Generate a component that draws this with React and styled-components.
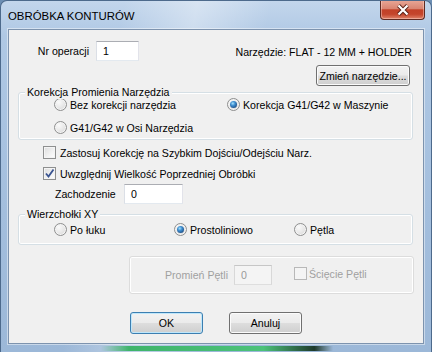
import styled, { createGlobalStyle } from "styled-components";

const GlobalStyle = createGlobalStyle`
  html, body {
    margin: 0;
    padding: 0;
    background: #6d8fb4;
  }
  body {
    font-family: "Liberation Sans", Arial, sans-serif;
    font-size: 10.6px;
    color: #000000;
  }
`;

function Radio({ checked, disabled }) {
  return (
    <RadioCircle $disabled={disabled}>{checked && <RadioDot />}</RadioCircle>
  );
}

function Checkbox({ checked, disabled }) {
  return (
    <CheckBoxSquare $disabled={disabled}>
      {checked && (
        <svg width="11" height="11" viewBox="0 0 11 11">
          <polyline
            points="2,5.5 4.5,8.5 9.5,1.5"
            fill="none"
            stroke="#3a5491"
            strokeWidth="1.8"
          />
        </svg>
      )}
    </CheckBoxSquare>
  );
}

function App() {
  return (
    <>
      <GlobalStyle />
      <Window>
        <TitleBar>
          <Title>OBRÓBKA KONTURÓW</Title>
          <CloseButton>
            <svg width="14" height="12" viewBox="0 0 14 12">
              <path d="M2.5 1.5 L11.5 10.5 M11.5 1.5 L2.5 10.5" stroke="#5a2219" strokeWidth="4" />
              <path d="M2.5 1.5 L11.5 10.5 M11.5 1.5 L2.5 10.5" stroke="#ffffff" strokeWidth="2.2" />
            </svg>
          </CloseButton>
        </TitleBar>
        <Client>
          <TopRow>
            <FieldLabel $width={71}>Nr operacji</FieldLabel>
            <TextBox $width={43}>1</TextBox>
            <Spacer />
            <ToolName>Narzędzie: FLAT - 12 MM + HOLDER</ToolName>
          </TopRow>
          <ChangeRow>
            <Button $width={94}>Zmień narzędzie...</Button>
          </ChangeRow>

          <Group $height={48}>
            <Legend>Korekcja Promienia Narzędzia</Legend>
            <RadioRow>
              <Option $width={173}>
                <Radio />
                Bez korekcji narzędzia
              </Option>
              <Option>
                <Radio checked />
                Korekcja G41/G42 w Maszynie
              </Option>
            </RadioRow>
            <RadioRow>
              <Option>
                <Radio />
                G41/G42 w Osi Narzędzia
              </Option>
            </RadioRow>
          </Group>

          <CheckList>
            <CheckRow>
              <Checkbox />
              Zastosuj Korekcję na Szybkim Dojściu/Odejściu Narz.
            </CheckRow>
            <CheckRow>
              <Checkbox checked />
              Uwzględnij Wielkość Poprzedniej Obróbki
            </CheckRow>
            <OverlapRow>
              <FieldLabel $width={69} $left>
                Zachodzenie
              </FieldLabel>
              <TextBox $width={59}>0</TextBox>
            </OverlapRow>
          </CheckList>

          <Group $height={31} $top={10}>
            <Legend>Wierzchołki XY</Legend>
            <RadioRow $height={29}>
              <Option $width={120}>
                <Radio />
                Po łuku
              </Option>
              <Option $width={120}>
                <Radio checked />
                Prostoliniowo
              </Option>
              <Option>
                <Radio />
                Pętla
              </Option>
            </RadioRow>
          </Group>

          <LoopGroup>
            <FieldLabel $width={69} $left $disabled>
              Promień Pętli
            </FieldLabel>
            <TextBox $width={38} $disabled>
              0
            </TextBox>
            <LoopCheck>
              <Checkbox disabled />
              Ścięcie Pętli
            </LoopCheck>
          </LoopGroup>

          <ButtonRow>
            <Button $width={73} $height={22} $default>
              OK
            </Button>
            <Button $width={73} $height={22}>
              Anuluj
            </Button>
          </ButtonRow>
        </Client>
        <Glow />
      </Window>
    </>
  );
}

const Window = styled.div`
  position: relative;
  width: 432px;
  height: 352px;
  box-sizing: border-box;
  padding: 0 7px 8px;
  display: flex;
  flex-direction: column;
  border: 1px solid #4d6a8c;
  border-bottom: none;
  border-radius: 7px 7px 0 0;
  background: linear-gradient(
      100deg,
      rgba(255, 255, 255, 0) 25%,
      rgba(255, 255, 255, 0.35) 40%,
      rgba(255, 255, 255, 0) 55%
    ),
    linear-gradient(180deg, #c3d6ec 0%, #afc8e4 10%, #a3bedd 60%, #9cb8d8 100%);
  overflow: hidden;
`;

const TitleBar = styled.div`
  height: 28px;
  display: flex;
  justify-content: space-between;
  align-items: center;
  margin-right: -1px;
`;

const Title = styled.div`
  font-size: 11.4px;
  line-height: 28px;
  padding-top: 1px;
  color: #000000;
`;

const CloseButton = styled.div`
  align-self: flex-start;
  width: 45px;
  height: 20px;
  box-sizing: border-box;
  display: flex;
  align-items: center;
  justify-content: center;
  margin-top: -1px;
  border: 1px solid #5e2a22;
  border-top: none;
  border-radius: 0 0 4px 4px;
  background: linear-gradient(
    180deg,
    #e9a898 0%,
    #d98572 45%,
    #c24128 52%,
    #c4452c 75%,
    #e0836a 100%
  );
  box-shadow: inset 0 0 0 1px rgba(255, 220, 210, 0.45);
`;

const Client = styled.div`
  flex: 1;
  display: flex;
  flex-direction: column;
  padding: 11px 10px 0 9px;
  background: #f0f0f0;
  border: 1px solid #7d93ae;
  box-shadow: 0 0 0 1px rgba(255, 255, 255, 0.45);
`;

const TopRow = styled.div`
  display: flex;
  align-items: center;
  height: 20px;
`;

const FieldLabel = styled.div`
  width: ${(p) => p.$width}px;
  flex-shrink: 0;
  text-align: ${(p) => (p.$left ? "left" : "right")};
  margin-right: ${(p) => (p.$left ? 0 : 7)}px;
  color: ${(p) => (p.$disabled ? "#a0a0a0" : "#000000")};
  white-space: nowrap;
`;

const TextBox = styled.div`
  width: ${(p) => p.$width}px;
  height: 20px;
  box-sizing: border-box;
  flex-shrink: 0;
  padding: 0 6px;
  display: flex;
  align-items: center;
  background: ${(p) => (p.$disabled ? "#f4f4f4" : "#ffffff")};
  color: ${(p) => (p.$disabled ? "#9a9a9a" : "#000000")};
  border: 1px solid;
  border-color: ${(p) =>
    p.$disabled ? "#c6c6c6 #d8d8d8 #dedede #d8d8d8" : "#abadb3 #e2e3ea #e3e9ef #dbdfe6"};
`;

const Spacer = styled.div`
  flex: 1;
`;

const ToolName = styled.div`
  margin-right: 1px;
  padding-top: 2px;
  white-space: nowrap;
`;

const ChangeRow = styled.div`
  display: flex;
  justify-content: flex-end;
  margin-top: 4px;
  padding-right: 3px;
`;

const Button = styled.div`
  width: ${(p) => p.$width}px;
  height: ${(p) => p.$height || 21}px;
  box-sizing: border-box;
  display: flex;
  align-items: center;
  justify-content: center;
  white-space: nowrap;
  border-radius: 3px;
  border: 1px solid ${(p) => (p.$default ? "#3c7fb1" : "#707070")};
  box-shadow: inset 0 0 0 1px ${(p) => (p.$default ? "#bfe7fb" : "#fbfbfb")};
  background: linear-gradient(
    180deg,
    #f2f2f2 0%,
    #ebebeb 48%,
    #dddddd 52%,
    #cfcfcf 100%
  );
`;

const Group = styled.div`
  position: relative;
  height: ${(p) => p.$height}px;
  box-sizing: border-box;
  margin-top: ${(p) => p.$top || 6}px;
  border: 1px solid #d5dfe5;
  border-radius: 3px;
  box-shadow: inset 0 0 0 1px #ffffff;
  padding-left: 35px;
`;

const Legend = styled.div`
  position: absolute;
  top: -8px;
  left: 6px;
  padding: 0 2px;
  line-height: 14px;
  background: #f0f0f0;
  white-space: nowrap;
`;

const RadioRow = styled.div`
  display: flex;
  align-items: center;
  height: ${(p) => p.$height || 23}px;
`;

const Option = styled.div`
  display: flex;
  align-items: center;
  gap: 3px;
  width: ${(p) => (p.$width ? `${p.$width}px` : "auto")};
  white-space: nowrap;
`;

const RadioCircle = styled.span`
  width: 13px;
  height: 13px;
  box-sizing: border-box;
  flex-shrink: 0;
  border-radius: 50%;
  display: flex;
  align-items: center;
  justify-content: center;
  border: 1px solid #8e8f8f;
  background: radial-gradient(circle at 35% 30%, #fafafa 0%, #e6e6e6 55%, #cfcfcf 100%);
  box-shadow: inset 0 0 0 1px #f4f4f4;
`;

const RadioDot = styled.span`
  width: 7px;
  height: 7px;
  border-radius: 50%;
  background: radial-gradient(circle at 40% 35%, #a6e1fb 0%, #3e8ed0 35%, #173e72 90%);
`;

const CheckBoxSquare = styled.span`
  width: 13px;
  height: 13px;
  box-sizing: border-box;
  flex-shrink: 0;
  display: flex;
  align-items: center;
  justify-content: center;
  border: 1px solid ${(p) => (p.$disabled ? "#b8b8b8" : "#8e8f8f")};
  background: ${(p) =>
    p.$disabled
      ? "#f4f4f4"
      : "linear-gradient(135deg, #dcdcdc 0%, #f2f2f2 60%, #ffffff 100%)"};
  box-shadow: inset 0 0 0 1px #f4f4f4;
`;

const CheckList = styled.div`
  display: flex;
  flex-direction: column;
  margin-top: 2px;
  padding-left: 25px;
`;

const CheckRow = styled.div`
  display: flex;
  align-items: center;
  gap: 4px;
  height: 21px;
  white-space: nowrap;
`;

const OverlapRow = styled.div`
  display: flex;
  align-items: center;
  height: 20px;
  padding-left: 12px;
`;

const LoopGroup = styled.div`
  display: flex;
  align-items: center;
  width: 285px;
  height: 38px;
  box-sizing: border-box;
  margin: 11px 0 0 111px;
  padding-left: 35px;
  border: 1px solid #dcdcdc;
  border-radius: 3px;
  box-shadow: inset 0 0 0 1px #ffffff;
`;

const LoopCheck = styled.div`
  display: flex;
  align-items: center;
  gap: 2px;
  margin: -3px 0 0 22px;
  color: #a0a0a0;
  white-space: nowrap;
`;

const ButtonRow = styled.div`
  display: flex;
  gap: 26px;
  margin-top: 18px;
  padding-left: 112px;
`;

const Glow = styled.div`
  position: absolute;
  left: 100px;
  bottom: 1px;
  width: 232px;
  height: 5px;
  background: linear-gradient(
    90deg,
    rgba(60, 180, 100, 0) 0%,
    #3fb46b 12%,
    #4cc27a 70%,
    #1f3a2c 92%,
    rgba(30, 50, 40, 0) 100%
  );
  filter: blur(0.5px);
`;

export default App;
